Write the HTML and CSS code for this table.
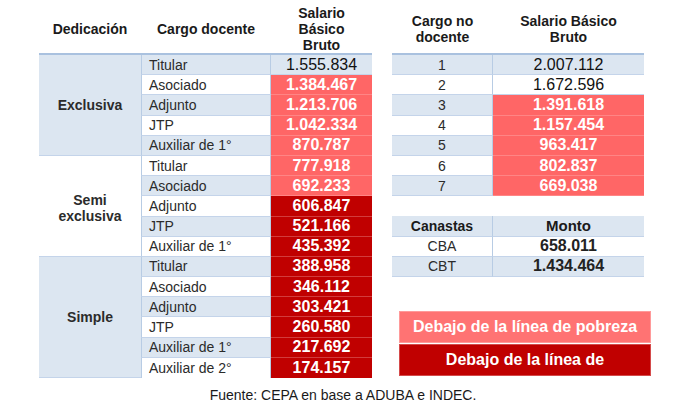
FILE: index.html
```html
<!DOCTYPE html>
<html lang="es">
<head>
<meta charset="utf-8">
<title>Salarios</title>
<link rel="stylesheet" href="styles.css">
</head>
<body>
<div class="page">
  <div class="tables">
    <div class="left">
      <div class="ltable">
        <div class="hd c1">Dedicación</div>
        <div class="hd c2">Cargo docente</div>
        <div class="hd c3 stack">Salario<br>Básico<br>Bruto</div>

        <div class="ded blue span5">Exclusiva</div>
        <div class="cargo blue">Titular</div><div class="sal blue plain">1.555.834</div>
        <div class="cargo white">Asociado</div><div class="sal light">1.384.467</div>
        <div class="cargo blue">Adjunto</div><div class="sal light">1.213.706</div>
        <div class="cargo white">JTP</div><div class="sal light">1.042.334</div>
        <div class="cargo blue">Auxiliar de 1°</div><div class="sal light">870.787</div>

        <div class="ded white span5 semi">Semi<br>exclusiva</div>
        <div class="cargo white">Titular</div><div class="sal light">777.918</div>
        <div class="cargo blue">Asociado</div><div class="sal light">692.233</div>
        <div class="cargo white">Adjunto</div><div class="sal dark">606.847</div>
        <div class="cargo blue">JTP</div><div class="sal dark">521.166</div>
        <div class="cargo white">Auxiliar de 1°</div><div class="sal dark">435.392</div>

        <div class="ded blue span6">Simple</div>
        <div class="cargo blue">Titular</div><div class="sal dark">388.958</div>
        <div class="cargo white">Asociado</div><div class="sal dark">346.112</div>
        <div class="cargo blue">Adjunto</div><div class="sal dark">303.421</div>
        <div class="cargo white">JTP</div><div class="sal dark">260.580</div>
        <div class="cargo blue">Auxiliar de 1°</div><div class="sal dark">217.692</div>
        <div class="cargo white last">Auxiliar de 2°</div><div class="sal dark last">174.157</div>
      </div>
    </div>

    <div class="right">
      <div class="rtable">
        <div class="hd r1 stack">Cargo no<br>docente</div>
        <div class="hd r2 stack">Salario Básico<br>Bruto</div>

        <div class="num blue">1</div><div class="rsal blue plain">2.007.112</div>
        <div class="num white">2</div><div class="rsal white plain">1.672.596</div>
        <div class="num blue">3</div><div class="rsal light">1.391.618</div>
        <div class="num white">4</div><div class="rsal light">1.157.454</div>
        <div class="num blue">5</div><div class="rsal light">963.417</div>
        <div class="num white">6</div><div class="rsal light">802.837</div>
        <div class="num blue">7</div><div class="rsal light">669.038</div>
      </div>

      <div class="ctable">
        <div class="num blue bold">Canastas</div><div class="rsal blue bold">Monto</div>
        <div class="num white">CBA</div><div class="rsal white amount">658.011</div>
        <div class="num blue">CBT</div><div class="rsal blue amount">1.434.464</div>
      </div>

      <div class="legend">
        <div class="lbox lpov">Debajo de la línea de pobreza</div>
        <div class="lbox lind">Debajo de la línea de</div>
      </div>
    </div>
  </div>
  <div class="footer">Fuente: CEPA en base a ADUBA e INDEC.</div>
</div>
</body>
</html>
```

FILE: styles.css
```css
* { box-sizing: border-box; }
html, body { margin: 0; padding: 0; background: #ffffff; }
body {
  font-family: "Liberation Sans", Arial, sans-serif;
  color: #222;
  width: 680px;
  height: 414px;
  overflow: hidden;
}
.page { display: flex; flex-direction: column; }
.tables { display: flex; padding-left: 39px; }

.ltable {
  display: grid;
  grid-template-columns: 102px 130px 101px;
  grid-template-rows: 55px repeat(16, 20.2px);
}
.right { margin-left: 20px; width: 260px; }
.rtable {
  display: grid;
  grid-template-columns: 101px 151px;
  grid-template-rows: 55px repeat(7, 20.2px);
}
.ctable {
  margin-top: 20px;
  display: grid;
  grid-template-columns: 101px 151px;
  grid-template-rows: repeat(3, 20.2px);
}

.hd {
  display: flex;
  align-items: center;
  justify-content: center;
  text-align: center;
  font-weight: bold;
  font-size: 14px;
  line-height: 16px;
  color: #1a1a1a;
  padding-top: 4px;
  border-bottom: 2px solid #a9c1df;
}
.c1 { grid-column: 1; }
.c2 { grid-column: 2; }
.c3 { grid-column: 3; }

.blue { background: #dce6f1; }
.white { background: #ffffff; }

.ded {
  grid-column: 1;
  display: flex;
  align-items: center;
  justify-content: center;
  text-align: center;
  font-weight: bold;
  font-size: 14px;
  line-height: 16px;
  color: #2b2b2b;
  border-bottom: 1px solid #c4d4ea;
}
.semi { padding-top: 5px; }
.span5 { grid-row: span 5; }
.span6 { grid-row: span 6; }

.cargo {
  grid-column: 2;
  display: flex;
  align-items: center;
  padding-left: 7px;
  font-size: 14px;
  color: #2b2b2b;
  border-left: 1px solid #b8cce4;
  border-right: 1px solid #b8cce4;
  border-bottom: 1px solid #c4d4ea;
}
.sal, .rsal, .num {
  display: flex;
  align-items: center;
  justify-content: center;
  font-size: 16px;
  border-bottom: 1px solid #c4d4ea;
}
.sal { grid-column: 3; }
.num { grid-column: 1; font-size: 14px; color: #2b2b2b; border-right: 1px solid #b8cce4; }
.rsal { grid-column: 2; }
.plain { color: #111; }
.light {
  background: #ff6666;
  color: #ffffff;
  font-weight: bold;
  border-bottom: 1px solid #ff8585;
}
.dark {
  background: #c00000;
  color: #ffffff;
  font-weight: bold;
  border-bottom: 1px solid #d23c3c;
}
.bold { font-weight: bold; color: #1a1a1a; font-size: 14px; }
.rsal.bold { font-size: 15px; }
.amount { font-weight: bold; color: #222; }
.last { border-bottom: none; }

.legend { margin-top: 34px; margin-left: 7px; width: 252px; }
.lbox {
  height: 32px;
  display: flex;
  align-items: center;
  justify-content: center;
  color: #ffffff;
  font-weight: bold;
  font-size: 16px;
}
.lpov { background: #ff7373; border: 1px solid #ff9a9a; }
.lind { background: #c00000; margin-top: 1px; border: 1px solid #d44a4a; }

.footer {
  margin-top: 9px;
  padding-left: 6px;
  text-align: center;
  font-size: 14px;
  line-height: 16px;
  color: #1a1a1a;
}
```
